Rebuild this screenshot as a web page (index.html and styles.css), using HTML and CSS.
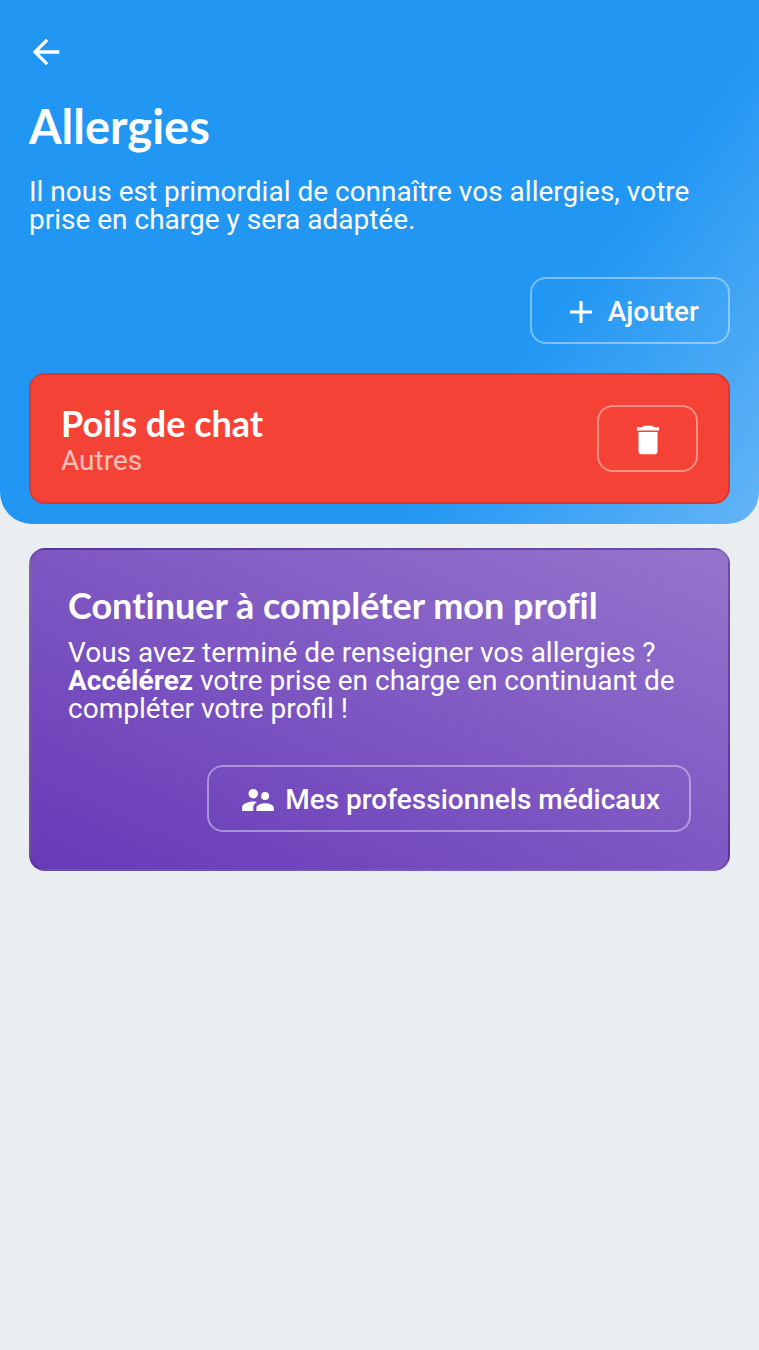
FILE: index.html
```html
<!DOCTYPE html>
<html lang="fr">
<head>
<meta charset="utf-8">
<meta name="viewport" content="width=device-width, initial-scale=1">
<title>Allergies</title>
<link rel="stylesheet" href="styles.css">
</head>
<body>
<header class="hero">
  <button class="back" type="button" aria-label="Retour">
    <svg class="back-icon" viewBox="0 0 24 24" aria-hidden="true"><path d="M20 11H7.83l5.59-5.59L12 4l-8 8 8 8 1.41-1.41L7.83 13H20z"/></svg>
  </button>
  <h1 class="page-title">Allergies</h1>
  <p class="text">Il nous est primordial de connaître vos allergies, votre prise en charge y sera adaptée.</p>
  <div class="actions">
    <button class="button" type="button">
      <svg class="icon" viewBox="0 0 24 24" aria-hidden="true"><path d="M19 13h-6v6h-2v-6H5v-2h6V5h2v6h6z"/></svg>
      Ajouter
    </button>
  </div>
  <article class="allergy">
    <div class="allergy-info">
      <h2 class="card-title">Poils de chat</h2>
      <p class="text allergy-type">Autres</p>
    </div>
    <button class="button" type="button" aria-label="Supprimer">
      <svg class="icon" viewBox="0 0 24 24" aria-hidden="true"><path d="M6 19a2 2 0 0 0 2 2h8a2 2 0 0 0 2-2V7H6zM19 4h-3.500a3 1 0 0 0-1-1h-5a3 1 0 0 0-1 1H5v2h14z"/></svg>
    </button>
  </article>
</header>
<main class="content">
  <section class="next">
    <h2 class="card-title">Continuer à compléter mon profil</h2>
    <p class="text next-text">Vous avez terminé de renseigner vos allergies&nbsp;? <strong>Accélérez</strong> votre prise en charge en continuant de compléter votre profil&nbsp;!</p>
    <div class="actions">
      <button class="button" type="button">
        <svg class="icon" viewBox="0 0 24 24" aria-hidden="true"><path d="M16.500 12a2.500 2.500 0 1 0 0-5 2.500 2.500 0 0 0 0 5zM9 11a3 3 0 1 0 0-6 3 3 0 0 0 0 6zm7.500 3c-1.830 0-5.500.920-5.500 2.750V19h11v-2.250c0-1.830-3.670-2.750-5.500-2.750zM9 13c-2.330 0-7 1.170-7 3.500V19h7v-2.250c0-.850.330-2.340 2.370-3.470C10.500 13.100 9.660 13 9 13z"/></svg>
        Mes professionnels médicaux
      </button>
    </div>
  </section>
</main>
</body>
</html>
```
FILE: styles.css
```css
* {
  box-sizing: border-box;
}

body {
  margin: 0;
  background: #eaeef1;
  color: #fff;
  font-family: Roboto, sans-serif;
}

h1,
h2,
p {
  margin: 0;
}

.hero {
  padding: 32px 29px 20px;
  border-radius: 0 0 32px 32px;
  background: linear-gradient(127deg, #2196f3 68%, #64b5f6);
}

.back {
  display: block;
  margin-left: -3px;
  padding: 0;
  border: 0;
  background: none;
}

.back-icon {
  display: block;
  width: 40px;
  height: 40px;
  fill: #fff;
}

.page-title {
  margin: 22px 0 20px;
  font: 700 47px/64px Lato, sans-serif;
}

.text {
  font-size: 28px;
  line-height: 28px;
}

.actions {
  display: flex;
  justify-content: flex-end;
}

.hero .actions {
  margin: 43px 0 29px;
}

.button {
  display: flex;
  align-items: center;
  gap: 8px;
  min-height: 67px;
  padding: 2px 29px 0 30px;
  border: 2px solid rgba(255, 255, 255, 0.4);
  border-radius: 16px;
  background: none;
  color: #fff;
  font: 500 28px/32px Roboto, sans-serif;
}

.icon {
  width: 38px;
  height: 38px;
  fill: #fff;
}

.allergy,
.next {
  border: 2px solid rgba(0, 0, 0, 0.12);
  border-radius: 16px;
}

.allergy {
  display: flex;
  align-items: center;
  justify-content: space-between;
  padding: 27px 30px;
  background: #f44336;
}

.allergy-type {
  margin-top: 3px;
  opacity: 0.66;
}

.card-title {
  font: 700 36px/42px Lato, sans-serif;
  font-variant-ligatures: none;
}

.content {
  padding: 24px 29px;
}

.next {
  padding: 34px 37px 37px;
  background: linear-gradient(to top right, #673ab7, #7e57c2, #9575cd);
}

.next-text {
  margin: 13px 0 42px;
}
```
